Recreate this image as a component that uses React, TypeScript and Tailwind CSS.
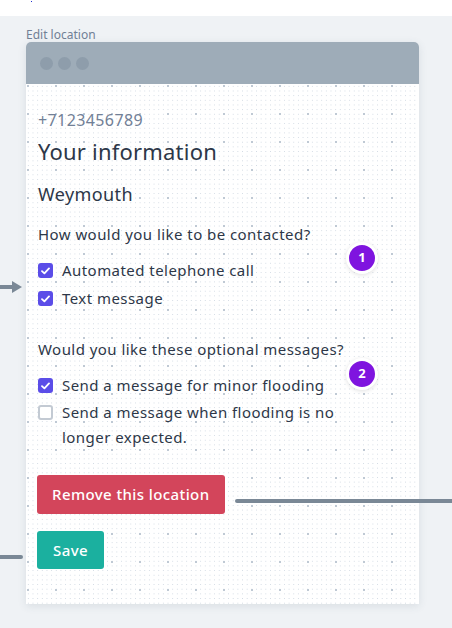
import React from "react";

const font = { fontFamily: "'Noto Sans', Roboto, sans-serif" };

function Check({ on }: { on: boolean }) {
  if (!on) {
    return <span className="mt-[5px] block h-[15px] w-[15px] shrink-0 rounded-[3px] border-2 border-[#c3cad3] bg-white" />;
  }
  return (
    <span className="mt-[5px] flex h-[15px] w-[15px] shrink-0 items-center justify-center rounded-[3px] bg-[#5b4de8]">
      <svg width="9" height="8" viewBox="0 0 9 8" fill="none">
        <path d="M1 4.2 3.4 6.4 8 1.4" stroke="white" strokeWidth="1.8" strokeLinecap="round" strokeLinejoin="round" />
      </svg>
    </span>
  );
}

function Option({ on, children }: { on: boolean; children: React.ReactNode }) {
  return (
    <label className="flex gap-[9px] text-[15px] leading-[25px] tracking-[0.45px] text-[#2d3748]">
      <Check on={on} />
      <span>{children}</span>
    </label>
  );
}

function Badge({ n }: { n: number }) {
  return (
    <span className="absolute right-[41px] flex h-[32px] w-[32px] items-center justify-center rounded-full border-[3px] border-white bg-[#7f14df] text-[13px] font-bold text-white shadow-[0_1px_4px_rgba(0,0,0,0.12)]">
      {n}
    </span>
  );
}

export default function App() {
  return (
    <div className="relative h-[628px] w-[452px] overflow-hidden bg-white" style={font}>
      <span className="absolute left-[31px] top-[1px] h-[1px] w-[1px] bg-[#2030d0]" />
      <div className="mt-[16px] h-[612px] bg-[#eff2f5] px-[26px] pt-[12px]">
        <p className="text-[12px] leading-[14px] text-[#718096]">Edit location</p>
        <div className="relative w-[393px] rounded-t-[5px] bg-white shadow-[0_2px_8px_rgba(60,80,100,0.12)]">
          <div className="flex h-[42px] items-center gap-[5px] rounded-t-[5px] bg-[#9eacb8] px-[14px]">
            <span className="h-[13px] w-[13px] rounded-full bg-[#8e9dab]" />
            <span className="h-[13px] w-[13px] rounded-full bg-[#8e9dab]" />
            <span className="h-[13px] w-[13px] rounded-full bg-[#8e9dab]" />
          </div>
          <div
            className="h-[520px] pl-[12px] pr-[40px] pt-[26px]"
            style={{
              backgroundImage:
                "radial-gradient(circle, #bfc9d4 1px, transparent 1.3px), radial-gradient(circle, #d2dae3 0.7px, transparent 0.9px)",
              backgroundSize: "28px 28px, 4.667px 4.667px",
              backgroundPosition: "-12px -12px, 0 0",
            }}
          >
            <p className="text-[16px] leading-[20px] tracking-[0.4px] text-[#718096]">+7123456789</p>
            <h1 className="mt-[6px] text-[22px] leading-[30px] tracking-[0.2px] text-[#2d3748]">Your information</h1>
            <h2 className="mt-[16px] text-[18px] leading-[24px] tracking-[0.4px] text-[#2d3748]">Weymouth</h2>
            <p className="mt-[18px] text-[15px] leading-[20px] tracking-[0.45px] text-[#2d3748]">
              How would you like to be contacted?
            </p>
            <div className="mt-[14px] flex flex-col gap-[3px]">
              <Option on>Automated telephone call</Option>
              <Option on>Text message</Option>
            </div>
            <p className="mt-[28px] text-[15px] leading-[20px] tracking-[0.45px] text-[#2d3748]">
              Would you like these optional messages?
            </p>
            <div className="mt-[14px] flex flex-col gap-[2px]">
              <Option on>Send a message for minor flooding</Option>
              <Option on={false}>Send a message when flooding is no longer expected.</Option>
            </div>
            <div className="mt-[25px] -ml-[1px] flex flex-col items-start gap-[17px]">
              <button className="h-[39px] rounded-[3px] bg-[#d3455b] px-[15px] text-[15px] font-medium tracking-[0.4px] text-white">
                Remove this location
              </button>
              <button className="h-[38px] rounded-[3px] bg-[#1bb09f] px-[16px] text-[15px] font-medium tracking-[0.4px] text-white">
                Save
              </button>
            </div>
          </div>
          <div className="pointer-events-none absolute inset-0">
            <div className="absolute right-0 top-[200px]">
              <Badge n={1} />
            </div>
            <div className="absolute right-0 top-[316px]">
              <Badge n={2} />
            </div>
          </div>
        </div>
      </div>
      {/* connector lines */}
      <div className="absolute left-0 top-[281px] flex items-center">
        <span className="h-[4px] w-[12px] bg-[#7a8896]" />
        <svg width="10" height="12" viewBox="0 0 10 12">
          <path d="M0 0 10 6 0 12Z" fill="#7a8896" />
        </svg>
      </div>
      <span className="absolute left-[235px] top-[499px] h-[4px] w-[217px] rounded-l-full bg-[#7a8896]" />
      <span className="absolute left-0 top-[555px] h-[4px] w-[23px] rounded-r-full bg-[#7a8896]" />
    </div>
  );
}
